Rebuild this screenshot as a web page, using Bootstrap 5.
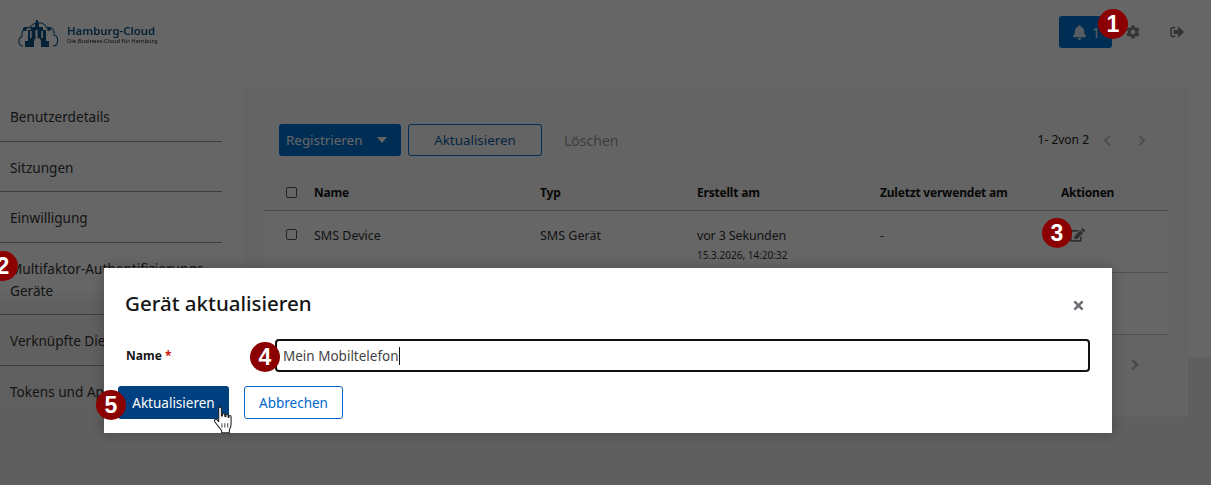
<!DOCTYPE html>
<html lang="de">
<head>
<meta charset="utf-8">
<title>Gerät aktualisieren</title>
<link href="https://cdn.jsdelivr.net/npm/bootstrap@5.3.0/dist/css/bootstrap.min.css" rel="stylesheet">
<style>
html,body{height:100%;margin:0;overflow:hidden}
body{font-family:"Noto Sans","Open Sans",sans-serif;font-size:13.5px;color:#151515;background:#fff}
.stage{width:1211px;height:485px;position:relative;overflow:hidden;background:#eee}
.topbar{height:88px;background:#fff;padding:16px 27px 0 17px}
.brand{gap:8px;filter:blur(.35px);margin-top:2px}
.brand-text{margin-top:3px}
.brand-name{font-size:11.4px;font-weight:600;line-height:13px;color:#0a5488}
.brand-sub{font-size:5.9px;line-height:9px;color:#222}
.bell-btn{width:53px;height:32px;background:#0070d0;color:#e4eef8;border:0;border-radius:3px;padding:0 0 0 14px;font-size:14px;margin-right:14px;gap:6px}
.top-ico{fill:#888;display:block}
.gear{margin-right:30px}
.shell{height:329px;background:linear-gradient(#fff 269px,#eee 269px)}
.side{width:243px;flex:none;padding-top:3px;background:linear-gradient(#fff 200px,#f0f0f0 216px,#eee)}
.side-list{width:222px}
.side-item{padding:15px 0 12.500px 10px;line-height:22px;border-bottom:1px solid #9a9a9a;font-size:13.6px;color:#333;white-space:nowrap}
.side-item.last{border-bottom:0}
.content{width:945px;flex:none;background:#fafafa;padding:36px 20px 0 21px;box-shadow:0 0 2px rgba(0,0,0,.08)}
.tools{height:32px;padding:0 15px;gap:7px}
.blue-fill{background:#0070d0;border:0;color:#fff;height:32px;width:122px;border-radius:3px;padding:0 7px;font-size:13.4px;font-family:inherit}
.blue-fill i{border:5px solid transparent;border-top:6px solid #fff;border-bottom:0;margin-right:7px}
.blue-line{border:1px solid #0070d0;background:transparent;color:#0a5da8;height:32px;width:134px;border-radius:3px;font-size:13.4px;padding:0}
.ghost{color:#9a9a9a;font-size:14px;margin-left:15px}
.pager{color:#222;font-size:12px;gap:0;padding-right:7px}
.pager svg{fill:#c4c4c4}
.pager-prev{margin-left:14px}
.pager-next{margin-left:27px}
.grid-tbl{table-layout:fixed;width:904px;margin:19px 0 0;border-collapse:collapse;font-size:12.5px}
.c-chk{width:50px}.c-name{width:226px}.c-typ{width:157px}.c-made{width:183px}.c-used{width:181px}.c-act{width:107px}
.grid-tbl th{font-weight:700;height:35px;padding:2px 0 0;border-bottom:1px solid #b8b8b8;vertical-align:middle;font-size:12px;letter-spacing:-.2px;color:#151515}
.grid-tbl td{padding:16px 0 0;vertical-align:top;height:62px;color:#333;line-height:17px;border-bottom:1px solid #c8c8c8;background:#fff}
.grid-tbl .chk{padding-left:22px}
.grid-tbl .chk i{display:block;width:11px;height:11px;border:1px solid #555;border-radius:2px;background:#fff}
.grid-tbl th.chk{padding-top:0}
.grid-tbl td.chk i{margin-top:2px}
.ago{letter-spacing:-.15px}
.stamp{font-size:10px;line-height:16px;display:block;margin-top:3px;color:#333}
.foot-nav{padding:24px 29px 0 0}
.foot-nav svg{fill:#b0b0b0;display:block}
.edit-ico{fill:#777;display:block;margin:1px 0 0 9px}
.dim{position:absolute;inset:0;background:rgba(0,0,0,.6)}
.dlg{position:absolute;left:104px;top:268px;width:1008px;height:165px;background:#fff;box-shadow:0 0 12px rgba(0,0,0,.25);padding:19px 22px 14px 14px}
.dlg-title{font-size:20.5px;font-weight:500;line-height:32px;color:#151515;margin-left:7px}
.dlg-x{fill:#6a6e73;display:block;margin-top:13px;margin-right:6px}
.dlg-row{margin-top:20px;height:33px}
.dlg-label{width:157px;flex:none;padding-left:8px;font-size:12px;font-weight:700;color:#151515;margin-top:1px}
.dlg-label span{color:#c9190b}
.input-wrap{flex:1 1 auto;position:relative}
.dlg-input{height:33px;border:2px solid #111;border-radius:4px;padding:1px 0 0 6px;font-size:13.5px;color:#444;box-shadow:none;background:#fff;font-family:inherit}
.dlg-input:focus{border-color:#111;box-shadow:none}
.caret-bar{position:absolute;left:124px;top:8px;width:1px;height:18px;background:#111}
.dlg-actions{margin-top:14px;gap:15px}
.dlg-save{width:111px;height:33px;background:#004080;color:#fff;border:0;border-radius:3px;font-size:13.5px;padding:1px 0 0}
.dlg-cancel{width:99px;height:33px;background:#fff;color:#06c;border:1px solid #06c;border-radius:3px;font-size:13.5px;padding:1px 0 0}
.pin{position:absolute;width:30px;height:30px;border-radius:50%;background:#8b0000;color:#fff;font:700 23px/30px "Liberation Sans",Arial,sans-serif;text-align:center}
.p1{left:1098px;top:9px}.p2{left:-12px;top:251px}.p3{left:1042px;top:218px}.p4{left:250px;top:342px}.p5{left:96px;top:390px}
.hand{position:absolute;left:213px;top:406px}
</style>
</head>
<body>
<div class="stage">
  <header class="topbar d-flex align-items-start justify-content-between">
    <div class="brand d-flex align-items-center">
      <svg width="42" height="30" viewBox="0 0 42 30" aria-hidden="true">
        <path d="M6 28C1 28 .5 20 5 18.500 4 12 9 8 13 10 16 3 27 3 30 10c5-2 8 3 7 7 5 1 5 11-1 11" fill="none" stroke="#0a5488" stroke-width="1.100"/>
        <path d="M8 29v-6h3V12h3V9h4V5h1V2h2v3h1v4h4v3h3v11h3v6H24v-5a3.500 4 0 0 0-7 0v5z" fill="#0a5488"/>
        <path d="M13 13h1.600v7H13zM18.500 12h2v8h-2zM24.400 13H26v7h-1.600z" fill="#fff"/>
        <circle cx="8" cy="11" r="2" fill="#0a5488"/><circle cx="32" cy="11" r="2" fill="#0a5488"/>
      </svg>
      <div class="brand-text"><div class="brand-name">Hamburg-Cloud</div><div class="brand-sub">Die Business-Cloud für Hamburg</div></div>
    </div>
    <div class="d-flex align-items-center">
      <button class="bell-btn d-flex align-items-center" type="button"><svg width="13" height="15" viewBox="0 0 448 512" fill="#d8e6f4"><path d="M224 512c35.320 0 63.970-28.650 63.970-64H160.030c0 35.350 28.650 64 63.970 64zm215.390-149.710c-19.320-20.760-55.470-51.990-55.470-154.290 0-77.700-54.480-139.900-127.940-155.160V32c0-17.670-14.320-32-31.980-32s-31.980 14.330-31.980 32v20.840C118.560 68.100 64.080 130.300 64.080 208c0 102.300-36.150 133.530-55.470 154.290-6 6.450-8.660 14.160-8.610 21.710.11 16.400 12.980 32 32.100 32h383.800c19.120 0 32-15.600 32.100-32 .05-7.550-2.610-15.270-8.610-21.710z"/></svg>1</button>
      <svg class="top-ico gear" width="14" height="14" viewBox="0 0 512 512"><path d="M487.400 315.700l-42.600-24.600c4.300-23.200 4.300-47 0-70.200l42.600-24.600c4.900-2.800 7.100-8.600 5.500-14-11.100-35.600-30-67.800-54.700-94.600-3.800-4.100-10-5.100-14.800-2.300L380.800 110c-17.900-15.400-38.500-27.300-60.800-35.100V25.800c0-5.600-3.900-10.500-9.400-11.700-36.700-8.200-74.300-7.800-109.200 0-5.500 1.200-9.400 6.100-9.400 11.700V75c-22.200 7.900-42.800 19.800-60.800 35.100L88.700 85.500c-4.900-2.800-11-1.900-14.800 2.300-24.700 26.700-43.600 58.900-54.700 94.600-1.700 5.400.6 11.200 5.500 14L67.300 221c-4.300 23.200-4.300 47 0 70.200l-42.600 24.600c-4.900 2.800-7.100 8.600-5.500 14 11.100 35.600 30 67.800 54.700 94.600 3.800 4.100 10 5.100 14.800 2.300l42.600-24.600c17.900 15.400 38.500 27.300 60.800 35.100v49.200c0 5.600 3.900 10.500 9.400 11.700 36.700 8.200 74.300 7.800 109.200 0 5.500-1.200 9.400-6.100 9.400-11.700v-49.200c22.200-7.900 42.800-19.800 60.800-35.100l42.600 24.600c4.900 2.800 11 1.900 14.800-2.300 24.700-26.700 43.600-58.900 54.700-94.600 1.500-5.500-.7-11.300-5.600-14.100zM256 336c-44.100 0-80-35.900-80-80s35.900-80 80-80 80 35.900 80 80-35.900 80-80 80z"/></svg>
      <svg class="top-ico" width="14" height="14" viewBox="0 0 512 512"><path d="M497 273L329 441c-15 15-41 4.500-41-17v-96H152c-13.300 0-24-10.700-24-24v-96c0-13.300 10.700-24 24-24h136V88c0-21.400 25.900-32 41-17l168 168c9.300 9.400 9.300 24.600 0 34zM192 436v-40c0-6.600-5.400-12-12-12H96c-17.700 0-32-14.300-32-32V160c0-17.700 14.300-32 32-32h84c6.600 0 12-5.400 12-12V76c0-6.600-5.400-12-12-12H96c-53 0-96 43-96 96v192c0 53 43 96 96 96h84c6.600 0 12-5.400 12-12z"/></svg>
    </div>
  </header>
  <div class="shell d-flex">
    <nav class="side">
      <div class="side-list">
        <div class="side-item">Benutzerdetails</div>
        <div class="side-item">Sitzungen</div>
        <div class="side-item">Einwilligung</div>
        <div class="side-item">Multifaktor-Authentifizierungs<br>Geräte</div>
        <div class="side-item">Verknüpfte Dienste</div>
        <div class="side-item last">Tokens und Apps</div>
      </div>
    </nav>
    <main class="content">
      <div class="tools d-flex align-items-center">
        <button class="blue-fill d-flex align-items-center justify-content-between" type="button">Registrieren<i></i></button>
        <button class="blue-line" type="button">Aktualisieren</button>
        <span class="ghost">Löschen</span>
        <div class="pager d-flex align-items-center ms-auto">
          <span>1- 2von 2</span>
          <svg class="pager-prev" width="8" height="11" viewBox="0 0 8 12"><path d="M6.500 0 8 1.500 3.500 6 8 10.500 6.500 12 0 6z"/></svg>
          <svg class="pager-next" width="8" height="11" viewBox="0 0 8 12"><path d="M1.500 0 8 6l-6.500 6L0 10.500 4.500 6 0 1.500z"/></svg>
        </div>
      </div>
      <table class="grid-tbl">
        <colgroup><col class="c-chk"><col class="c-name"><col class="c-typ"><col class="c-made"><col class="c-used"><col class="c-act"></colgroup>
        <thead><tr><th class="chk"><i></i></th><th>Name</th><th>Typ</th><th>Erstellt am</th><th>Zuletzt verwendet am</th><th>Aktionen</th></tr></thead>
        <tbody>
          <tr><td class="chk"><i></i></td><td>SMS Device</td><td>SMS Gerät</td><td><span class="ago">vor 3 Sekunden</span><span class="stamp">15.3.2026, 14:20:32</span></td><td>-</td><td><svg class="edit-ico" width="15" height="14" viewBox="0 0 576 512"><path d="M402.600 83.200l90.200 90.200c3.800 3.800 3.800 10 0 13.800L274.400 405.600l-92.800 10.300c-12.400 1.400-22.900-9.100-21.500-21.500l10.300-92.800L388.800 83.200c3.800-3.800 10-3.800 13.800 0zm162-22.900l-48.800-48.800c-15.200-15.200-39.900-15.200-55.200 0l-35.400 35.400c-3.800 3.800-3.800 10 0 13.800l90.200 90.200c3.800 3.800 10 3.800 13.800 0l35.400-35.400c15.200-15.300 15.200-40 0-55.200zM384 346.200V448H64V128h229.800c3.200 0 6.200-1.300 8.500-3.500l40-40c7.600-7.600 2.200-20.500-8.500-20.500H48C21.500 64 0 85.500 0 112v352c0 26.500 21.500 48 48 48h352c26.500 0 48-21.500 48-48V306.200c0-10.700-12.900-16-20.500-8.500l-40 40c-2.200 2.300-3.500 5.300-3.500 8.500z"/></svg></td></tr>
          <tr><td class="chk"><i></i></td><td></td><td></td><td></td><td></td><td></td></tr>
        </tbody>
      </table>
      <div class="foot-nav d-flex justify-content-end"><svg width="8" height="11" viewBox="0 0 8 12"><path d="M1.500 0 8 6l-6.500 6L0 10.500 4.500 6 0 1.500z"/></svg></div>
    </main>
  </div>
  <div class="dim"></div>
  <section class="dlg">
    <div class="d-flex justify-content-between align-items-start">
      <div class="dlg-title">Gerät aktualisieren</div>
      <svg class="dlg-x" width="11" height="11" viewBox="0 0 11 11"><path d="M2.300.5 5.500 3.700 8.700.5l1.800 1.800-3.200 3.200 3.200 3.200-1.800 1.800-3.200-3.200-3.200 3.200L.5 8.700l3.200-3.200L.5 2.300z"/></svg>
    </div>
    <div class="dlg-row d-flex align-items-center">
      <div class="dlg-label">Name <span>*</span></div>
      <div class="input-wrap">
        <input class="form-control dlg-input" type="text" value="Mein Mobiltelefon" aria-label="Name">
        <span class="caret-bar"></span>
      </div>
    </div>
    <div class="dlg-actions d-flex">
      <button class="dlg-save" type="button">Aktualisieren</button>
      <button class="dlg-cancel" type="button">Abbrechen</button>
    </div>
  </section>
  <svg class="hand" width="20" height="28" viewBox="0 0 18 26" aria-hidden="true"><path d="M5 2.200c0-1.500 2.500-1.500 2.500 0v7l1 .1V7.800c0-1.300 2.200-1.300 2.200 0v2l.9.200V8.700c0-1.200 2.100-1.200 2.100 0v1.800l.8.200V9.800c0-1.200 2-1.200 2 0v7c0 2.400-.8 4-1.600 5.400v2.600H7.700v-2.200C6 20.500 3 17 1.300 14.400c-.9-1.500 1-2.900 2.300-1.500L5 14.500z" fill="#fff" stroke="#222" stroke-width="1" stroke-linejoin="round"/><path d="M8 16v4m2.700-4v4m2.700-4v4" stroke="#222" stroke-width=".8"/></svg>
  <div class="pin p1">1</div>
  <div class="pin p2">2</div>
  <div class="pin p3">3</div>
  <div class="pin p4">4</div>
  <div class="pin p5">5</div>
</div>
<script src="https://cdn.jsdelivr.net/npm/bootstrap@5.3.0/dist/js/bootstrap.bundle.min.js"></script>
</body>
</html>
